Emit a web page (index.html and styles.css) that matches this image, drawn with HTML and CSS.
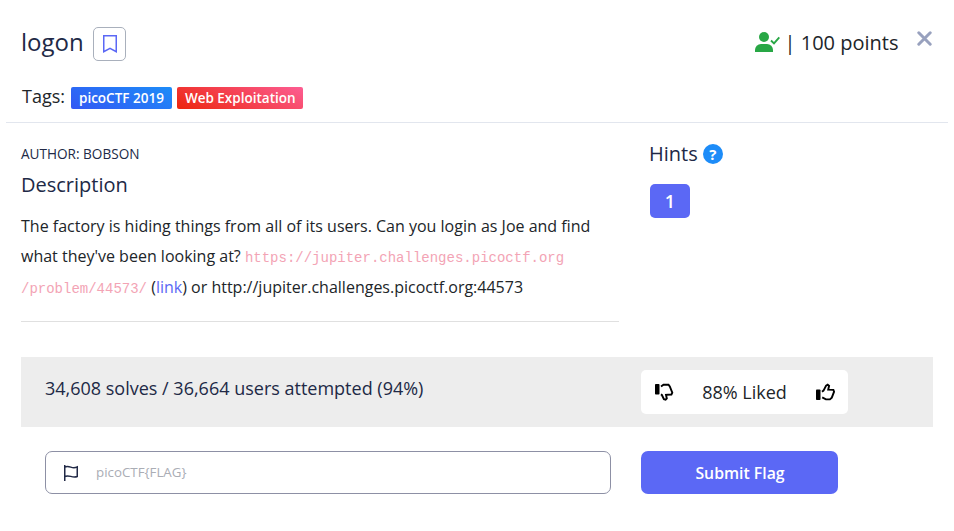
FILE: index.html
```html
<!DOCTYPE html>
<html lang="en">
<head>
<meta charset="utf-8">
<title>logon</title>
<link rel="stylesheet" href="styles.css">
</head>
<body>
<main class="modal">
  <header class="head">
    <div class="title-row">
      <h1>logon</h1>
      <button class="bookmark" aria-label="Bookmark">
        <svg width="16" height="20" viewBox="0 0 16 20" fill="none" stroke="#5b68f5" stroke-width="1.5"><path d="M1.75 1.75h12.5v16L8 14.25l-6.25 3.5z"/></svg>
      </button>
      <div class="points">
        <svg class="solved" width="25" height="20" viewBox="0 0 25 20"><circle cx="9" cy="5" r="5" fill="#28a745"/><path d="M0 20v-2a6 6 0 0 1 6-6h6a6 6 0 0 1 6 6v2z" fill="#28a745"/><path d="M16 8.500l3 2.900 5.300-6" fill="none" stroke="#28a745" stroke-width="1.900"/></svg>
        <span>| 100 points</span>
      </div>
      <button class="close" aria-label="Close">
        <svg width="15" height="15" viewBox="0 0 15 15" fill="none" stroke="#98a1be" stroke-width="3" stroke-linecap="round"><path d="M1.800 1.800l11.400 11.400M13.200 1.800L1.800 13.200"/></svg>
      </button>
    </div>
    <div class="tags"><span class="tags-label">Tags:</span><span class="tag blue">picoCTF 2019</span><span class="tag red">Web Exploitation</span></div>
  </header>
  <div class="content">
    <section class="description">
      <h2 class="author">AUTHOR: BOBSON</h2>
      <h2>Description</h2>
      <p>The factory is hiding things from all of its users. Can you login as Joe and find what they've been looking at? <code>https://jupiter.challenges.picoctf.org</code><br><code>/problem/44573/</code> (<a>link</a>) or http://jupiter.challenges.picoctf.org:44573</p>
    </section>
    <aside class="hints">
      <h2>Hints <span class="help">?</span></h2>
      <button class="hint">1</button>
    </aside>
  </div>
  <section class="stats">
    <span class="solves">34,608 solves / 36,664 users attempted (94%)</span>
    <div class="rating">
      <svg width="20" height="18" viewBox="0 0 20 18"><rect x="1" y="1" width="4.500" height="10.500" rx=".8"/><path d="M7 3.500L9.500 1.700h5l1.300 1.800 2.500 6.100-.9 1.900-5.400.3.800 3.700-1.200 1.100-1.700-.4-2-4.200-1-.6" fill="none" stroke="#000" stroke-width="1.900"/></svg>
      <span>88% Liked</span>
      <svg width="20" height="18" viewBox="0 0 20 18"><rect x="1" y="6.500" width="4.500" height="10.500" rx=".8"/><path d="M7 8.800l1.500-1.200 2.600-5 1.600-1 1.400 1.200-.9 3.900 5.200.2.700 1.800-2.300 6-1.900 1.700h-4l-3.700-2" fill="none" stroke="#000" stroke-width="1.900"/></svg>
    </div>
  </section>
  <form class="submit">
    <label class="flag-field">
      <svg width="16" height="18" viewBox="0 0 16 18" fill="none" stroke="#212946" stroke-width="1.500"><path d="M1.750 1v16M1.750 3q2.500-1.200 6 .1t6.500-.2v9.600q-2.500 1-6.500-.1t-6 .2"/></svg>
      <input type="text" placeholder="picoCTF{FLAG}">
    </label>
    <button type="button" class="send">Submit Flag</button>
  </form>
</main>
</body>
</html>
```

FILE: styles.css
```css
* { box-sizing: border-box; }
body { margin: 0; background: #fff; color: #212529; font-family: "Open Sans", sans-serif; }
h1, h2, p { margin: 0; font-weight: 400; }
button { border: 0; padding: 0; font-family: inherit; background: none; }
svg { display: block; flex: none; }
.modal { height: 531px; padding: 0 6px; overflow: hidden; }
.head { height: 123px; padding: 27px 15px 0; border-bottom: 1px solid #e2e6ee; }
.title-row { display: flex; height: 34px; }
h1 { width: 72px; font-size: 24px; line-height: 30px; color: #212946; }
.bookmark { display: flex; align-items: center; justify-content: center; width: 33px; height: 34px; border: 1px solid #a9b0bc; border-radius: 5px; }
.points { display: flex; margin-left: auto; font-size: 20px; line-height: 32px; }
.solved { margin: 5px 5px 0 0; }
.close { height: 15px; margin: 4px 1px 0 18.5px; }
.tags { display: flex; margin-top: 21px; height: 27px; }
.tags-label { width: 49px; padding-left: 1px; font-size: 18px; line-height: 28px; }
.tag { height: 22px; margin: 5px 5px 0 1px; padding: 0 8px; border-radius: 2px; color: #fff; font-size: 13.5px; font-weight: 600; line-height: 22px; white-space: nowrap; }
.tag + .tag { margin-left: 0; padding-right: 7.5px; }
.blue { background: linear-gradient(25deg, #3358f4, #1d8cf8); }
.red { background: linear-gradient(25deg, #ec250d, #fd5d93); }
.content { display: grid; grid-template-columns: 598px 1fr; column-gap: 30px; padding: 0 15px; height: 234px; }
.description { height: 199px; border-bottom: 1px solid #e0e0e0; }
h2 { font-size: 20px; line-height: 26px; color: #212946; }
.author { margin-top: 21px; margin-bottom: 8px; font-size: 13.6px; line-height: 20px; }
.description p { margin-top: 13px; font-size: 16px; line-height: 30.4px; }
code { font-family: "Liberation Mono", monospace; font-size: 14px; line-height: 1; color: #f3a4b5; }
a { color: #5b68f5; }
.hints h2 { display: flex; align-items: center; gap: 5px; margin-top: 18px; }
.help { width: 20px; height: 20px; border-radius: 50%; background: #1d8cf8; color: #fff; font-size: 15px; font-weight: 700; line-height: 20px; text-align: center; }
.hint { width: 40px; height: 34px; margin: 17px 0 0 1px; border-radius: 5px; background: #5b68f5; color: #fff; font-size: 18px; font-weight: 600; line-height: 34px; }
.stats { display: flex; height: 70px; margin: 0 15px; padding: 13px 24px; background: #ededed; }
.solves { width: 596px; font-size: 18px; line-height: 36px; color: #212946; }
.rating { display: flex; align-items: center; justify-content: space-between; width: 207px; height: 44px; padding: 0 13px; border-radius: 5px; background: #fff; font-size: 18px; }
.submit { display: flex; gap: 30px; margin: 24px 39px 0; }
.flag-field { display: flex; align-items: center; width: 566px; height: 43px; padding-left: 17px; border: 1px solid #8d90a5; border-radius: 7px; }
input { width: 450px; margin: 0 0 2px 17px; padding: 0; border: 0; outline: 0; background: none; font: 13.333px "Open Sans", sans-serif; }
input::placeholder { color: #aaadb5; opacity: 1; }
.send { width: 197px; height: 43px; padding-left: 1px; border-radius: 7px; background: #5b68f5; color: #fff; font-size: 15.8px; font-weight: 600; }
```
